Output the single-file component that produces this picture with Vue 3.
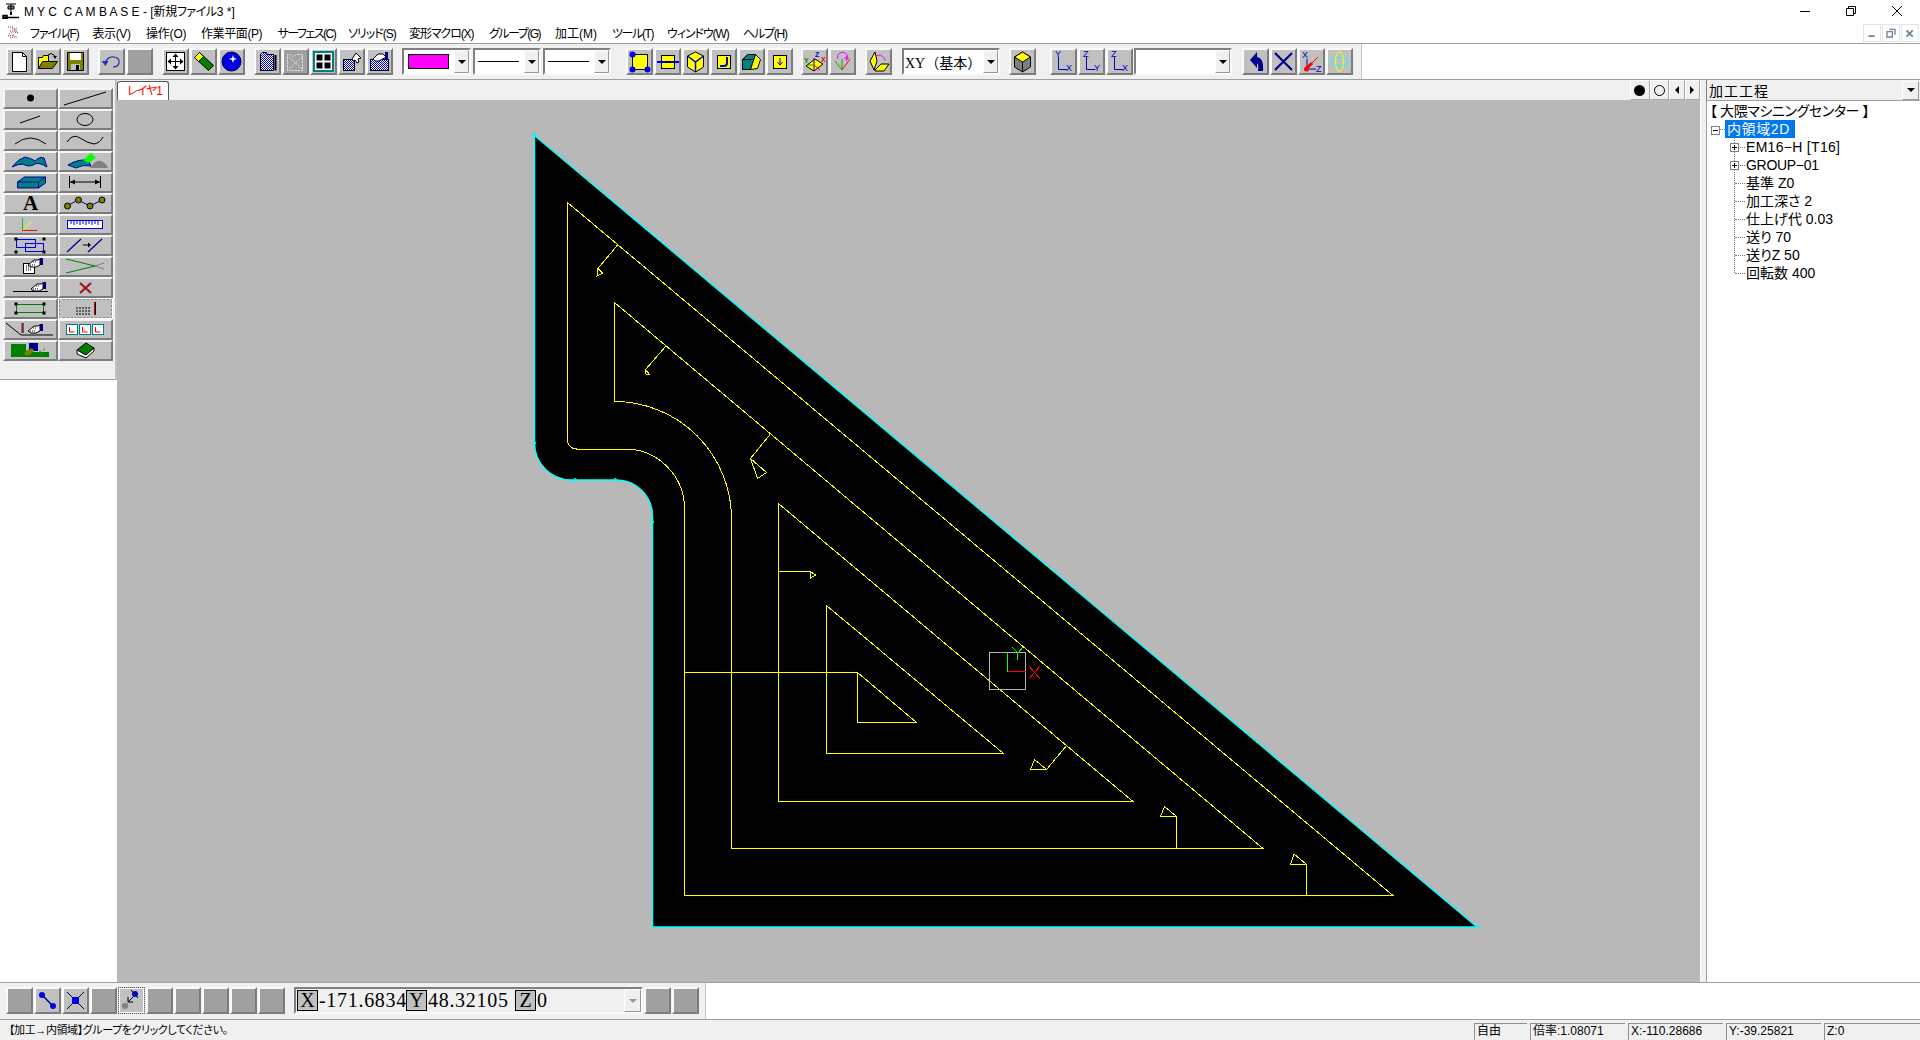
<script setup>
// small pointing hand used by several tools
const hand = (x, y) =>
  `<g transform="translate(${x} ${y})"><path d="M0 7l6-5h4l2-1v6l-4 2H3z" fill="#fff" stroke="#000"/><path d="M2 7h5M5 4h4" stroke="#000" stroke-dasharray="1 1"/><rect x="12" y="0" width="3" height="7" fill="#00008b"/></g>`

const corners = (pts) => pts.map(([x, y]) => `<rect x="${x - 1.5}" y="${y - 1.5}" width="3" height="3" fill="#000"/>`).join('')

const yellowBox = '<rect x="5.5" y="5.5" width="13" height="13" fill="#ff0" stroke="#000"/>'
const axisL = (a, b, c) =>
  `<path d="M6.5 7v12.5h9" fill="none" stroke="#0000c0"/><text x="${a}" y="7" class="ax">${b}</text><text x="14" y="21" class="ax">${c}</text>`

const icons = {
  blank: '',
  new: '<path d="M4.5 2.5h10l4 4v15h-14z" fill="#fff" stroke="#000"/><path d="M14.5 2.5v4h4" fill="none" stroke="#000"/>',
  open: '<path d="M2.5 18.5v-11h4l1-2h5v13z" fill="#ff0" stroke="#000"/><path d="M2.5 18.5l4-7h15l-5 7z" fill="#808000" stroke="#000"/><path d="M12 5q3-3 6 0l1 2" fill="none" stroke="#000"/><path d="M17 6h4l-2 3z"/>',
  save: '<path d="M3.5 2.5h16v18h-16z" fill="#808000" stroke="#000"/><rect x="6" y="3" width="11" height="7" fill="#fff"/><rect x="7" y="14" width="9" height="6" fill="#c0c0c0"/><rect x="12" y="15" width="3" height="5" fill="#000"/>',
  undo: '<path d="M5 13q3-7 9-6 6 1 5 6-1 4-6 4" fill="none" stroke="#2030b0" stroke-width="1.2"/><path d="M1.5 11l7 0-3 5z" fill="#2030b0"/>',
  fit: '<rect x="2.5" y="2.5" width="18" height="18" fill="#fff" stroke="#000"/><path d="M11.5 4v15M4 11.5h15" stroke="#000"/><path d="M11.5 3.5l-3 3.5h6zM11.5 19.5l-3-3.5h6zM3.5 11.5l3.5-3v6zM19.5 11.5l-3.5-3v6z"/>',
  eraser: '<path d="M2.5 7.5l5-5 14 13-5 5z" fill="#008000" stroke="#000"/><path d="M2.5 7.5l5-5 4 4-5 5z" fill="#ff0" stroke="#000"/>',
  sphere: '<circle cx="11.5" cy="11.5" r="9.5" fill="#0000e0" stroke="#000040"/><path d="M13 5l1 3 3 1-3 1-1 3-1-3-3-1 3-1z" fill="#fff"/>',
  doc1: '<path d="M4.5 20.5v-16l2-2h4l1 2h6v16z" fill="url(#chk)" stroke="#000"/><path d="M19.5 5v15.5" stroke="#000" stroke-width="2"/>',
  doc2: '<path d="M3.5 20.5v-16h3l2 2 4-2h6v16z" fill="none" stroke="#e8e8e8" stroke-dasharray="2 1"/><path d="M5 7l13 12M18 7L5 19" stroke="#e8e8e8" stroke-dasharray="2 1"/>',
  panes: '<rect x="2" y="2" width="19" height="19" fill="#fff" stroke="#008080" stroke-width="2"/><rect x="4.5" y="4.5" width="6" height="6" fill="#000"/><rect x="12.5" y="4.5" width="6" height="6" fill="#000"/><rect x="4.5" y="12.5" width="6" height="6" fill="#000"/><rect x="12.5" y="12.5" width="6" height="6" fill="#000"/>',
  doc3: '<rect x="3.5" y="9.5" width="11" height="11" fill="url(#chk)" stroke="#000"/><path d="M12 9l4-6 5 5-3 1 1 3-2 1-2-3-2 1z" fill="#fff" stroke="#000"/>',
  doc4: '<rect x="2.5" y="9.5" width="18" height="11" fill="url(#chk)" stroke="#000"/><path d="M5 9l5-5h5l3 3-7 4H7z" fill="#fff" stroke="#000"/><rect x="17" y="2" width="3" height="7" fill="#00008b"/>',
  pts: '<rect x="4.5" y="4.5" width="15" height="15" fill="#ff0" stroke="#000"/><circle cx="4.5" cy="4.5" r="3" fill="#0000e0"/><circle cx="4.5" cy="19.5" r="3" fill="#0000e0"/><circle cx="19.5" cy="19.5" r="3" fill="#0000e0"/>',
  bar: yellowBox + '<path d="M1 12h22" stroke="#0000e0" stroke-width="2"/><path d="M9 12h6" stroke="#000" stroke-width="2"/>',
  cube: '<path d="M11.5 2l8 4v11l-8 5-8-5V6z" fill="#ff0" stroke="#000"/><path d="M3.5 6l8 6 8-6M11.5 12v10" fill="none" stroke="#0000e0" stroke-width="1.5"/>',
  jcurve: yellowBox + '<path d="M15 7v6q0 3-3 3H8" fill="none" stroke="#0000e0" stroke-width="2"/>',
  box: '<path d="M2.5 9.5l5-5h8v5l-5 10h-8z" fill="#008080" stroke="#000"/><path d="M15.5 4.5l5 5-3 9-7 1 2-6z" fill="#ff0" stroke="#000"/><path d="M2.5 9.5h10" stroke="#000"/>',
  down: yellowBox + '<path d="M12 8v7M9.5 12l2.5 3 2.5-3" fill="none" stroke="#0000e0"/>',
  plane: '<path d="M3 16l9-7 8 5-9 7z" fill="#ff0" stroke="#000"/><path d="M11 21V8" stroke="#0000c0"/><path d="M11 15l6 5" stroke="#f00"/><path d="M5 15l6 0" stroke="#0a0"/><text x="12" y="7" class="lt" fill="#0000e0">Z</text><text x="1" y="13" class="lt" fill="#080">Y</text><text x="18" y="12" class="lt" fill="#f00">X</text>',
  tilt: '<path d="M11 20L4 11" stroke="#0a0"/><path d="M11 20l8-11" stroke="#f00"/><path d="M11 20V9" stroke="#0a0"/><path d="M7 9a5 5 0 1 1 8 2" fill="none" stroke="#f0f"/><path d="M13 8h5M15.5 6v4" stroke="#f0f"/>',
  folds: '<path d="M3 11l5-9 2 9-3 9z" fill="#ff0" stroke="#000"/><path d="M8 20l6-6h8l-5 7H8z" fill="#ff0" stroke="#000"/><path d="M9 6a6 6 0 0 1 9 5" fill="none" stroke="#f0f"/>',
  solid: '<path d="M11.5 2l8 5v10l-8 5-8-5V7z" fill="#808080" stroke="#000"/><path d="M3.5 7l8-5 8 5-8 5z" fill="#ff0" stroke="#000"/><path d="M11.5 12v10" stroke="#000"/>',
  lyx: axisL(3, 'Y', 'X'),
  lzy: axisL(3, 'Z', 'Y'),
  lzx: axisL(3, 'Z', 'X'),
  back: '<path d="M6 10l7-8v5q7 1 6 14h-5q1-7-1-8v5z" fill="#00008b"/>',
  cross: '<path d="M3 3l17 17M20 3L3 20" stroke="#00008b" stroke-width="2.2"/>',
  axz: '<path d="M7 9v10h9" fill="none" stroke="#0000c0"/><circle cx="6.5" cy="19" r="2.5" fill="#f00"/><path d="M7 18l5-5" stroke="#f00" stroke-width="3"/><path d="M12 13l6-6" stroke="#f00"/><text x="2" y="8" class="ax">X</text><text x="16" y="22" class="ax">Z</text>',
  orbit: '<ellipse cx="11.5" cy="11.5" rx="9" ry="4" fill="none" stroke="#0ff"/><ellipse cx="11.5" cy="11.5" rx="4" ry="10" fill="none" stroke="#ff0"/>',
  link: '<path d="M6 6l11 11" stroke="#00008b" stroke-width="1.5"/><circle cx="6" cy="6" r="3" fill="#0000e0"/><circle cx="17" cy="17" r="3" fill="#0000e0"/>',
  meet: '<path d="M3 3l17 17M20 3L3 20" stroke="#000"/><rect x="8" y="8" width="7" height="7" fill="#0000e0"/>',
  snap: '<circle cx="6" cy="18" r="3" fill="#808080"/><path d="M6 18l3-3" stroke="#808080"/><path d="M9 14l6-6M9 9v5h5" fill="none" stroke="#000"/><circle cx="16" cy="6" r="3" fill="#0000e0"/><path d="M12 2l7 8" stroke="#000"/>'
}

const toolbar = {
  file: ['new', 'open', 'save'],
  edit: ['undo', 'blank'],
  view: ['fit', 'eraser', 'sphere'],
  docs: ['doc1', 'doc2', 'panes', 'doc3', 'doc4'],
  shape: ['pts', 'bar', 'cube', 'jcurve', 'box', 'down'],
  axis: ['plane', 'tilt'],
  axes: ['lyx', 'lzy', 'lzx'],
  tail: ['back', 'cross', 'axz', 'orbit']
}
const isOff = (name) => name === 'blank' || name === 'doc2'

// label, slot width, tracking (the kana in the original UI font run narrow)
const menus = [
  ['ファイル(F)', 62.5, -1.2], ['表示(V)', 53.5, -0.4], ['操作(O)', 55, -0.2], ['作業平面(P)', 76.5, -0.4],
  ['サーフェス(C)', 70.5, -1.5], ['ソリッド(S)', 61, -1], ['変形マクロ(X)', 80, -1.1], ['グループ(G)', 66, -1.5],
  ['加工(M)', 57, 0], ['ツール(T)', 55, -1.4], ['ウィンドウ(W)', 76, -1.1], ['ヘルプ(H)', 60, -1.2]
]

const tools = [
  '<circle cx="27.5" cy="10" r="3.5"/>',
  '<path d="M6 17L48 4" stroke="#000"/>',
  '<path d="M17 14L37 7" stroke="#000"/>',
  '<ellipse cx="27" cy="10.5" rx="8" ry="6" fill="none" stroke="#000"/>',
  '<path d="M12 14Q27 2 43 14" fill="none" stroke="#000"/>',
  '<path d="M9 12Q15 3 22 8t14 6q6-1 9-7" fill="none" stroke="#000"/>',
  '<path d="M9 16Q15 8 22 6q6 1 10 4 5-5 9-3l3 9q-8-5-12-3-6 4-12 0-5 0-11 3z" fill="#008080" stroke="#0000a0"/>',
  '<path d="M32 17q6-9 11-7t7 7z" fill="#808080"/><path d="M10 14q10-6 20-5l3 6q-8-2-15 2z" fill="#008080" stroke="#0000a0"/><path d="M25 9l8-7 5 5-8 5z" fill="#0f0"/>',
  '<path d="M14.5 10l7-5h21v6l-7 5h-21z" fill="#008080" stroke="#0000a0"/><path d="M14.5 10h21v6M35.5 10l7-5" fill="none" stroke="#0000a0"/>',
  '<path d="M11.5 4v12M42.5 4v12M12 10h30" stroke="#000"/><path d="M12 10l5-2.5v5zM42 10l-5-2.5v5z"/>',
  '<text x="27.5" y="17" class="big">A</text>',
  '<path d="M9 13l11-6 12 6 12-6" fill="none" stroke="#0000a0"/><g fill="#808000" stroke="#000"><circle cx="9.5" cy="13" r="3"/><circle cx="20.5" cy="7" r="3"/><circle cx="32" cy="13" r="3"/><circle cx="44" cy="7" r="3"/></g>',
  '<path d="M19.5 4v13" stroke="#0c0"/><path d="M19 16.5h15" stroke="#f00"/><path d="M20 16l8-8" stroke="#ff0"/>',
  '<rect x="9.5" y="6.5" width="35" height="8" fill="#fff" stroke="#0000e0"/><path d="M13 7v3M16 7v4M19 7v3M22 7v4M25 7v3M28 7v4M31 7v3M34 7v4M37 7v3M40 7v4" stroke="#0000e0"/>',
  '<rect x="13.5" y="4.5" width="19" height="8" fill="none" stroke="#0000e0"/><rect x="22.5" y="8.5" width="18" height="8" fill="none" stroke="#0000e0"/>' + corners([[13, 4], [41, 4], [13, 17], [41, 17]]),
  '<path d="M9 17L23 4M30 17L44 4" stroke="#00008b" stroke-width="1.3"/><path d="M25 10h7" stroke="#000"/><path d="M33 10l-3-2.5v5z"/>',
  '<rect x="20.5" y="7.5" width="11" height="10" fill="#fff" stroke="#000"/><path d="M23 10h6M23 12h6M23 14h6" stroke="#000" stroke-dasharray="1 1"/>' + hand(25, 2),
  '<path d="M8 3l29 7-29 7" fill="none" stroke="#008000"/><path d="M37 10l9-3M37 10l9 3" stroke="#808080"/>',
  '<path d="M10 14.5h35" stroke="#000"/>' + hand(28, 5),
  '<path d="M22 6l11 10M33 6L22 16" stroke="#a01010" stroke-width="2"/>',
  '<rect x="13.5" y="6.5" width="27" height="8" fill="none" stroke="#008000"/>' + corners([[13, 6], [41, 6], [13, 15], [41, 15]]),
  '<path d="M18 10h15M18 13h15M18 16h15" stroke="#000" stroke-dasharray="2 1"/><path d="M36.5 4v13" stroke="#c00000"/><path d="M37.5 4v13" stroke="#000"/>',
  '<path d="M3 4l15 12h32" fill="none" stroke="#000"/><path d="M19 4v10" stroke="#c00000"/><path d="M20 4v10" stroke="#000"/>' + hand(25, 5),
  [9, 22, 35].map((x) => `<rect x="${x - 0.5}" y="5.5" width="11" height="10" fill="#fff" stroke="#008080"/><path d="M${x + 2.5} 8v5h5" fill="none" stroke="#f00"/>`).join(''),
  '<path d="M8 4h15v8h23v5H8z" fill="#008000"/><rect x="26" y="3" width="9" height="8" fill="#00008b"/><ellipse cx="26" cy="12" rx="5" ry="2.5" fill="#808000" transform="rotate(-30 26 12)"/><path d="M36 12l2-1M40 10l2-1M38 14l2-1" stroke="#0a0"/>',
  '<path d="M19 10l9-7 8 5-8 7z" fill="#008000" stroke="#000"/><path d="M19 10v4l9 4 8-7V8l-8 7z" fill="#fff" stroke="#000"/>'
]

const bottomButtons = ['blank', 'link', 'meet', 'blank', 'snap', 'blank', 'blank', 'blank', 'blank', 'blank']

const treeItems = [
  { text: 'EM16−H [T16]', plus: true, cls: 'spaced' },
  { text: 'GROUP−01', plus: true, cls: 'tight' },
  { text: '基準 Z0' },
  { text: '加工深さ 2' },
  { text: '仕上げ代 0.03' },
  { text: '送り 70' },
  { text: '送りZ 50' },
  { text: '回転数 400' }
]

const status = [
  ['自由', 53], ['倍率:1.08071', 95], ['X:-110.28686', 95], ['Y:-39.25821', 95], ['Z:0', 96]
]

const yellowPaths = [
  // offset passes, outer to inner
  'M568.5 203.5V441a9 9 0 0 0 9 9H626a59.5 60 0 0 1 59.5 60V896.5H1394Z',
  'M615.5 303.5V402.5A117 117.5 0 0 1 732.5 520V849.5H1264Z',
  'M779.5 504.5V802.5H1134Z',
  'M827.5 606.5V754.5H1004.5Z',
  'M858.5 673.5V723.5H917.5Z',
  'M685.5 673.5H858.5',
  // lead-in marks
  'M619 245.5L599 269.5L598 277L603.5 274L599 269.5',
  'M667 347L646.5 370.5L646.5 375L650.5 375.5L646.5 370.5',
  'M771 435.5L751.5 459.5L758.5 479.5L767.5 473.5L751.5 459.5',
  'M779.5 572.5H811.5V579L816.5 576L811.5 572.5',
  'M1068 746L1047.5 770.5H1031.5L1035.5 760.5L1047.5 770.5',
  'M1177.5 849V817.5H1161.5L1165.5 807.5L1177.5 817.5',
  'M1307.5 896V865.5H1291.5L1295 855L1307.5 865.5'
]
</script>

<template>
  <div class="app">
    <svg class="defs" width="0" height="0">
      <defs>
        <pattern id="chk" width="2" height="2" patternUnits="userSpaceOnUse">
          <rect width="2" height="2" fill="#fff" />
          <rect width="1" height="1" fill="#0000e0" />
          <rect x="1" y="1" width="1" height="1" fill="#0000e0" />
        </pattern>
      </defs>
    </svg>

    <header class="titlebar">
      <svg class="logo" viewBox="0 0 18 16">
        <path d="M4 1h10M9 1v8M6 3h6v3H6z" fill="#808080" stroke="#000" />
        <path d="M9 9v3" stroke="#000" stroke-width="2" />
        <path d="M1 14.5h16M1 12.5h4v3H1z" fill="#808000" stroke="#000" stroke-width="1.5" />
      </svg>
      <span class="title">M Y C&nbsp; C A M B A S E - [<span class="kana">新規ファイル</span>3 *]</span>
      <div class="winctl">
        <svg viewBox="0 0 46 20"><path d="M18 10.5h10" stroke="#000" /></svg>
        <svg viewBox="0 0 46 20"><path d="M18.5 7.5h7v7h-7zM20.5 7.5v-2h7v7h-2" fill="none" stroke="#000" /></svg>
        <svg viewBox="0 0 46 20"><path d="M18 5l10 10M28 5L18 15" stroke="#000" /></svg>
      </div>
    </header>

    <nav class="menubar">
      <svg class="doc-icon" viewBox="0 0 15 15">
        <path d="M1 2h6M7 4l3-1M3 6h7M2 9l5-3M6 10l5 3M3 13l5-1" stroke="#e02020" stroke-dasharray="1 1" />
        <path d="M8 7l4 1M1 11l6-1M5 3l5 3" stroke="#2030c0" stroke-dasharray="1 1" />
      </svg>
      <span
        v-for="m in menus"
        :key="m[0]"
        class="menu"
        :style="{ width: m[1] + 'px', letterSpacing: m[2] + 'px' }"
      >{{ m[0] }}</span>
      <div class="mdi">
        <svg viewBox="0 0 18 18"><path d="M5 12.5h7" stroke="#6a85a0" stroke-width="2" /></svg>
        <svg viewBox="0 0 18 18"><path d="M4.5 7.5h6v6h-6zM7 5h6.5v6" fill="none" stroke="#6a85a0" stroke-width="1.5" /></svg>
        <svg viewBox="0 0 18 18"><path d="M5 6l7 7M12 6l-7 7" stroke="#6a85a0" stroke-width="2" /></svg>
      </div>
    </nav>

    <div class="toolbar">
      <div class="tb-inner">
        <div class="tb-group">
          <div v-for="n in toolbar.file" :key="n" class="btn"><svg viewBox="0 0 23 23" v-html="icons[n]"></svg></div>
        </div>
        <div class="tb-group">
          <div v-for="n in toolbar.edit" :key="n" class="btn" :class="{ off: isOff(n) }"><svg viewBox="0 0 23 23" v-html="icons[n]"></svg></div>
        </div>
        <div class="tb-group">
          <div v-for="n in toolbar.view" :key="n" class="btn"><svg viewBox="0 0 23 23" v-html="icons[n]"></svg></div>
        </div>
        <div class="tb-group">
          <div v-for="n in toolbar.docs" :key="n" class="btn" :class="{ off: isOff(n) }"><svg viewBox="0 0 23 23" v-html="icons[n]"></svg></div>
        </div>
        <div class="tb-group combos mr8">
          <div class="combo w69"><i class="swatch"></i><b class="drop"></b></div>
          <div class="combo w68"><i class="linestyle"></i><b class="drop"></b></div>
          <div class="combo w68"><i class="linestyle"></i><b class="drop"></b></div>
        </div>
        <div class="sep"></div>
        <div class="tb-group mr8">
          <div v-for="n in toolbar.shape" :key="n" class="btn"><svg viewBox="0 0 23 23" v-html="icons[n]"></svg></div>
        </div>
        <div class="tb-group">
          <div v-for="n in toolbar.axis" :key="n" class="btn"><svg viewBox="0 0 23 23" v-html="icons[n]"></svg></div>
        </div>
        <div class="tb-group mr10">
          <div class="btn"><svg viewBox="0 0 23 23" v-html="icons.folds"></svg></div>
        </div>
        <div class="combo w98 mr9">
          <span class="plane-name">XY（基本）</span><b class="drop"></b>
        </div>
        <div class="tb-group mr7">
          <div class="btn"><svg viewBox="0 0 23 23" v-html="icons.solid"></svg></div>
        </div>
        <div class="sep"></div>
        <div class="tb-group mr1">
          <div v-for="n in toolbar.axes" :key="n" class="btn"><svg viewBox="0 0 23 23" v-html="icons[n]"></svg></div>
        </div>
        <div class="combo w98 mr10"><b class="drop"></b></div>
        <div class="tb-group">
          <div v-for="n in toolbar.tail" :key="n" class="btn"><svg viewBox="0 0 23 23" v-html="icons[n]"></svg></div>
        </div>
      </div>
    </div>

    <main class="main">
      <aside class="left">
        <div class="tools">
          <div v-for="(t, i) in tools" :key="i" class="tool" :class="{ pressed: i === 21 }">
            <svg viewBox="2 2 51 17" v-html="t"></svg>
          </div>
        </div>
      </aside>

      <section class="center">
        <div class="tabs">
          <div class="tab">レイヤ1</div>
          <div class="pager">
            <span class="page"><i class="dot"></i></span>
            <span class="page"><i class="ring"></i></span>
            <span class="page narrow"><i class="tri-l"></i></span>
            <span class="page narrow"><i class="tri-r"></i></span>
          </div>
        </div>
        <svg class="drawing" viewBox="118 101 1583 882">
          <path
            d="M535.5 136.5L1478 928H653.5V517A36 36 0 0 0 617.5 481H572A37 37 0 0 1 535.5 444Z"
            fill="#000"
            stroke="#00ffff"
            stroke-width="1.5"
          />
          <g fill="none" stroke="#00ffff">
            <circle cx="535" cy="136" r="1.5" />
            <circle cx="535" cy="444" r="1.5" />
            <circle cx="576" cy="481" r="1.5" />
            <circle cx="616" cy="481" r="1.5" />
            <circle cx="653" cy="523" r="1.5" />
            <circle cx="1478" cy="928" r="1.5" />
          </g>
          <g fill="none" stroke="#ffff00" shape-rendering="crispEdges">
            <path v-for="d in yellowPaths" :key="d" :d="d" />
          </g>
          <g fill="none" shape-rendering="crispEdges">
            <rect x="990.5" y="653.5" width="36" height="37" stroke="#b4b4b4" />
            <path d="M1008.5 653V672.5" stroke="#00ff00" />
            <path d="M1008.5 672.5H1027" stroke="#ff0000" />
            <path d="M1013 648l6 6 5-6M1018.5 654v7" stroke="#00ff00" />
            <path d="M1030 667l11 13M1041 667l-11 13" stroke="#ff0000" />
          </g>
        </svg>
      </section>

      <div class="splitter"></div>

      <aside class="right">
        <div class="process">
          <span class="process-name">加工工程</span>
          <b class="drop small"></b>
        </div>
        <div class="tree">
          <div class="vline"></div>
          <div class="row root-row">【 大隈マシニングセンター 】</div>
          <div class="row second">
            <span class="box minus"></span>
            <span class="selected">内領域2D</span>
          </div>
          <div v-for="t in treeItems" :key="t.text" class="row child" :class="t.cls">
            <span v-if="t.plus" class="box plus"></span>
            {{ t.text }}
          </div>
        </div>
      </aside>
    </main>

    <div class="bottombar">
      <div class="bb-inner">
        <div class="tb-group mr9">
          <div v-for="(n, i) in bottomButtons" :key="i" class="btn" :class="{ off: n === 'blank', pressed: n === 'snap' }">
            <svg viewBox="0 0 23 23" v-html="icons[n]"></svg>
          </div>
        </div>
        <div class="coords">
          <span class="axis-key">X</span><span class="val w-x">-171.6834</span>
          <span class="axis-key">Y</span><span class="val w-y">48.32105</span>
          <span class="axis-key">Z</span><span class="val">0</span>
          <b class="drop grey"></b>
        </div>
        <div class="tb-group end">
          <div class="btn off"></div>
          <div class="btn off"></div>
        </div>
      </div>
    </div>

    <footer class="statusbar">
      <span class="hint">【加工→内領域】グループをクリックしてください。</span>
      <span v-for="s in status" :key="s[0]" class="panel" :style="{ width: s[1] + 'px' }">{{ s[0] }}</span>
    </footer>
  </div>
</template>

<style scoped>
.app {
  width: 1920px;
  height: 1040px;
  display: flex;
  flex-direction: column;
  background: #fff;
  color: #000;
  font-family: "Liberation Sans", "Noto Sans CJK JP", sans-serif;
  font-size: 12px;
  font-feature-settings: "palt";
  overflow: hidden;
}
.defs {
  position: absolute;
}

/* title + menu */
.titlebar {
  height: 23px;
  box-sizing: border-box;
  padding-bottom: 2px;
  display: flex;
  align-items: center;
  flex-shrink: 0;
}
.logo {
  width: 18px;
  height: 16px;
  margin-left: 2px;
  margin-top: 1px;
}
.title {
  margin-left: 4px;
  white-space: pre;
}
.kana {
  letter-spacing: -0.4px;
}
.winctl {
  margin-left: auto;
  display: flex;
}
.winctl svg {
  width: 46px;
  height: 20px;
}
.menubar {
  height: 20px;
  box-sizing: border-box;
  padding-bottom: 2px;
  display: flex;
  align-items: center;
  flex-shrink: 0;
}
.doc-icon {
  width: 15px;
  height: 15px;
  margin-left: 7px;
  margin-right: 8px;
}
.menu {
  white-space: nowrap;
}
.mdi {
  margin-left: auto;
  display: flex;
  gap: 1px;
  margin-right: 1px;
  margin-bottom: -2px;
}
.mdi svg {
  width: 18px;
  height: 18px;
  border: 1px solid #e4e4e4;
  box-sizing: border-box;
}

/* toolbars */
.toolbar {
  height: 37px;
  flex-shrink: 0;
  box-sizing: border-box;
  border-top: 1px solid #a0a0a0;
  border-bottom: 1px solid #a0a0a0;
}
.tb-inner {
  width: 1362px;
  height: 100%;
  box-sizing: border-box;
  background: #f0f0f0;
  border-right: 1px solid #c8c8c8;
  display: flex;
  align-items: flex-start;
  padding: 4px 0 0 6px;
}
.tb-group {
  display: flex;
  gap: 1px;
  margin-right: 9px;
}
.mr1 { margin-right: 1px; }
.mr7 { margin-right: 7px; }
.mr8 { margin-right: 8px; }
.mr9 { margin-right: 9px; }
.mr10 { margin-right: 10px; }
.btn {
  width: 27px;
  height: 27px;
  box-sizing: border-box;
  border: 2px solid;
  border-color: #fafafa #7c7c7c #7c7c7c #fafafa;
  background: #c0c0c0;
  flex-shrink: 0;
}
.btn svg {
  display: block;
  width: 23px;
  height: 23px;
}
.btn.off {
  background: #a0a0a0;
}
.btn.pressed {
  border: 1px dotted #666;
  outline: 1px solid #fff;
  outline-offset: -2px;
}
.sep {
  width: 1px;
  height: 35px;
  margin-top: -4px;
  margin-right: 7px;
  background: #c4c4c4;
}
.combos {
  gap: 2px;
}
.combo {
  height: 27px;
  box-sizing: border-box;
  border: 2px solid;
  border-color: #808080 #fafafa #fafafa #808080;
  background: #fff;
  display: flex;
  align-items: center;
  flex-shrink: 0;
}
.w69 { width: 69px; }
.w68 { width: 68px; }
.w98 { width: 98px; }
.swatch {
  width: 41px;
  height: 15px;
  margin-left: 4px;
  background: #ff00ff;
  border: 1px solid #000;
  box-sizing: border-box;
}
.linestyle {
  width: 41px;
  height: 1px;
  margin-left: 3px;
  background: #000;
}
.drop {
  width: 15px;
  height: 23px;
  margin-left: auto;
  box-sizing: border-box;
  border: 1px solid;
  border-color: #fff #999 #999 #fff;
  background: #f0f0f0;
  display: flex;
  align-items: center;
  justify-content: center;
  flex-shrink: 0;
}
.drop::after {
  content: "";
  border-left: 4px solid transparent;
  border-right: 4px solid transparent;
  border-top: 4px solid #000;
}
.plane-name {
  font-family: "Liberation Serif", "Noto Sans CJK JP", serif;
  font-size: 14px;
  font-feature-settings: normal;
  padding-left: 1px;
  white-space: nowrap;
}

/* main area */
.main {
  flex: 1;
  min-height: 0;
  display: flex;
  border-bottom: 1px solid #a0a0a0;
}
.left {
  width: 117px;
  flex-shrink: 0;
}
.tools {
  height: 300px;
  box-sizing: border-box;
  background: #f0f0f0;
  border-bottom: 1px solid #a0a0a0;
  padding: 8px 0 0 3px;
  display: grid;
  grid-template-columns: 55px 55px;
  grid-auto-rows: 21px;
  align-content: start;
  width: 117px;
  border-right: 2px solid #c0c0c0;
}
.tool {
  box-sizing: border-box;
  border: 2px solid;
  border-color: #f6f6f6 #7c7c7c #7c7c7c #f6f6f6;
  background: #c0c0c0;
}
.tool svg {
  display: block;
  width: 51px;
  height: 17px;
  overflow: visible;
}
.tool.pressed {
  border: 2px dotted #888;
  outline: 1px solid #fff;
  outline-offset: -1px;
}
.center {
  flex: 1;
  min-width: 0;
  display: flex;
  flex-direction: column;
}
.tabs {
  height: 20px;
  background: #f0f0f0;
  display: flex;
  justify-content: space-between;
  flex-shrink: 0;
}
.tab {
  width: 52px;
  box-sizing: border-box;
  margin-top: 1px;
  padding-left: 3px;
  background: #fff;
  border: 1px solid #555;
  border-bottom: none;
  border-radius: 3px 3px 0 0;
  color: #f00;
  text-align: center;
  font-size: 12px;
  line-height: 19px;
  letter-spacing: -1px;
}
.pager {
  display: flex;
}
.page {
  width: 19.5px;
  box-sizing: border-box;
  border: 1px solid;
  border-color: #fff #a8a8a8 #a8a8a8 #fff;
  display: flex;
  align-items: center;
  justify-content: center;
}
.page.narrow {
  width: 15.5px;
}
.dot {
  width: 11px;
  height: 11px;
  border-radius: 50%;
  background: #000;
}
.ring {
  width: 11px;
  height: 11px;
  box-sizing: border-box;
  border-radius: 50%;
  border: 1px solid #000;
}
.tri-l {
  border-top: 4px solid transparent;
  border-bottom: 4px solid transparent;
  border-right: 4px solid #000;
}
.tri-r {
  border-top: 4px solid transparent;
  border-bottom: 4px solid transparent;
  border-left: 4px solid #000;
}
.drawing {
  display: block;
  width: 1583px;
  height: 882px;
  background: #b8b8b8;
}
.splitter {
  width: 6px;
  flex-shrink: 0;
  background: #f0f0f0;
  box-sizing: border-box;
  border-left: 1px solid #fff;
}
.right {
  width: 214px;
  flex-shrink: 0;
  display: flex;
  flex-direction: column;
}
.process {
  height: 21px;
  flex-shrink: 0;
  box-sizing: border-box;
  border-left: 1px solid #808080;
  border-bottom: 1px solid #a0a0a0;
  background: #f0f0f0;
  display: flex;
  align-items: center;
}
.process-name {
  font-family: "Liberation Serif", "Noto Sans CJK JP", serif;
  font-size: 14px;
  letter-spacing: 1px;
  padding-left: 2px;
}
.drop.small {
  height: 19px;
  width: 17px;
  margin-right: 1px;
}
.tree {
  flex: 1;
  position: relative;
  box-sizing: border-box;
  border-left: 1px solid #a0a0a0;
  padding-top: 1px;
  font-size: 14px;
  line-height: 18px;
}
.vline {
  position: absolute;
  left: 27px;
  top: 34px;
  height: 138px;
  border-left: 1px dotted #777;
}
.row {
  height: 18px;
  position: relative;
  white-space: nowrap;
}
.root-row {
  padding-left: 3px;
  letter-spacing: -0.4px;
}
.second {
  padding-left: 18px;
}
.selected {
  display: inline-block;
  height: 18px;
  padding: 0 2px;
  width: 70px;
  box-sizing: border-box;
  background: #0078f0;
  color: #fff;
  letter-spacing: 0.6px;
}
.child {
  padding-left: 39px;
}
.child::before {
  content: "";
  position: absolute;
  left: 28px;
  top: 9px;
  width: 10px;
  border-top: 1px dotted #777;
}
.second::before {
  content: "";
  position: absolute;
  left: 13px;
  top: 9px;
  width: 5px;
  border-top: 1px dotted #777;
}
.spaced {
  letter-spacing: 0.3px;
}
.tight {
  letter-spacing: -0.3px;
}
.box {
  position: absolute;
  width: 9px;
  height: 9px;
  box-sizing: border-box;
  border: 1px solid #808080;
  background: #fff;
  z-index: 1;
}
.box::before {
  content: "";
  position: absolute;
  left: 1px;
  top: 3px;
  width: 5px;
  height: 1px;
  background: #000;
}
.plus::after {
  content: "";
  position: absolute;
  left: 3px;
  top: 1px;
  width: 1px;
  height: 5px;
  background: #000;
}
.minus {
  left: 4px;
  top: 6px;
}
.plus {
  left: 23px;
  top: 5px;
}

/* bottom */
.bottombar {
  height: 37px;
  flex-shrink: 0;
  box-sizing: border-box;
  border-bottom: 1px solid #a0a0a0;
}
.bb-inner {
  width: 706px;
  height: 100%;
  box-sizing: border-box;
  background: #f0f0f0;
  border-right: 1px solid #c8c8c8;
  display: flex;
  padding: 4px 0 0 6px;
}
.coords {
  width: 349px;
  height: 27px;
  box-sizing: border-box;
  border: 2px solid;
  border-color: #808080 #fafafa #fafafa #808080;
  background: #f0f0f0;
  display: flex;
  align-items: center;
  padding-left: 1px;
  flex-shrink: 0;
  font-family: "Liberation Serif", serif;
  font-size: 20px;
  font-feature-settings: normal;
}
.axis-key {
  width: 21px;
  height: 21px;
  box-sizing: border-box;
  border: 1px solid #000;
  background: #c0c0c0;
  text-align: center;
  line-height: 19px;
  flex-shrink: 0;
}
.val {
  letter-spacing: 0.7px;
  padding-left: 1px;
  white-space: nowrap;
}
.w-x { width: 87px; }
.w-y { width: 87px; }
.drop.grey {
  height: 23px;
  width: 17px;
}
.drop.grey::after {
  border-top-color: #999;
}
.end {
  margin: 0 0 0 1px;
}
.statusbar {
  height: 20px;
  flex-shrink: 0;
  background: #f0f0f0;
  display: flex;
  align-items: flex-end;
  gap: 3px;
}
.hint {
  margin-right: auto;
  margin-left: 9px;
  align-self: center;
  white-space: nowrap;
  font-size: 11px;
  letter-spacing: -0.4px;
  margin-top: -2px;
}
.panel {
  height: 17px;
  box-sizing: border-box;
  border-top: 1px solid #909090;
  border-left: 1px solid #909090;
  padding-left: 2px;
  line-height: 15px;
  white-space: nowrap;
  flex-shrink: 0;
}
</style>

<style>
body {
  margin: 0;
  overflow: hidden;
}
.ax {
  font: 9px "Liberation Sans", sans-serif;
  fill: #0000c0;
}
.lt {
  font: bold 7px "Liberation Sans", sans-serif;
}
.big {
  font: bold 21px "Liberation Serif", serif;
  text-anchor: middle;
}
</style>
